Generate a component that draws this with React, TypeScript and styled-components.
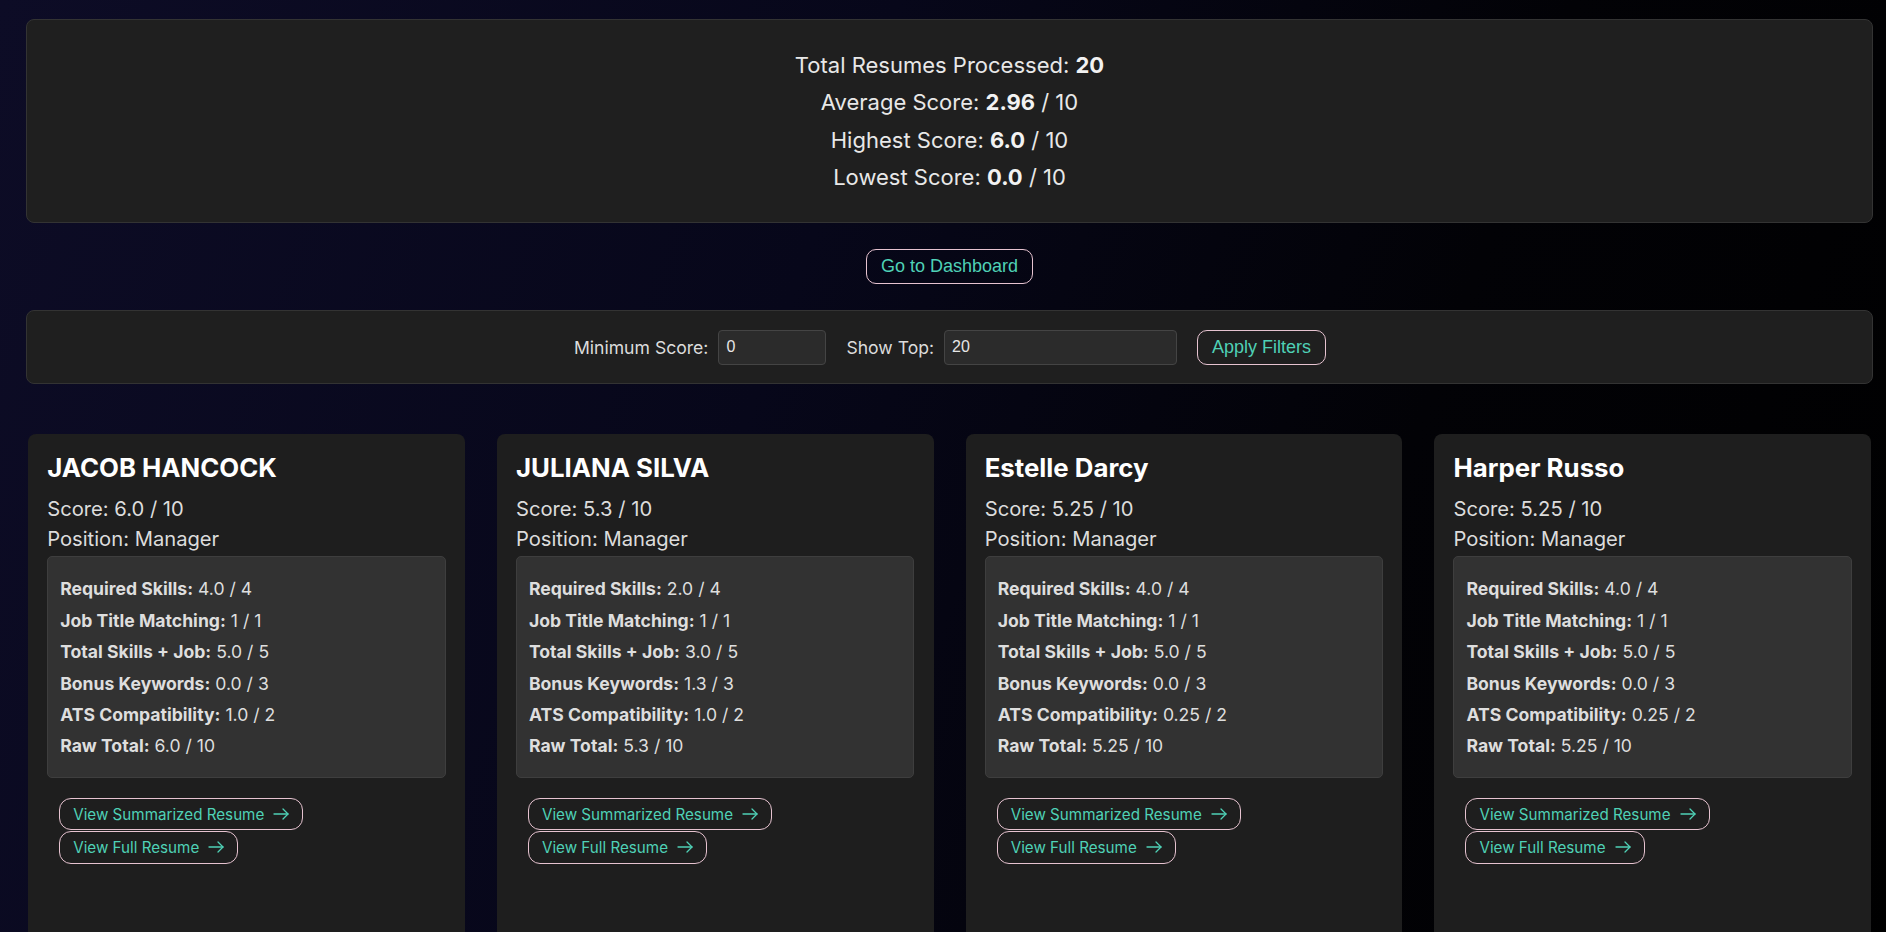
import React from "react";
import styled, { createGlobalStyle } from "styled-components";

const GlobalStyle = createGlobalStyle`
  html, body {
    margin: 0;
    padding: 0;
    overflow: hidden;
  }
  body {
    font-family: Inter, "Noto Sans", sans-serif;
    color: rgba(255, 255, 255, 0.87);
    background: linear-gradient(110deg, #0d0c26 0%, #07071a 40%, #020206 70%, #000000 100%);
    min-height: 100vh;
  }
`;

const Page = styled.div`
  display: flex;
  flex-direction: column;
  padding: 19px 13px 0 26px;
  min-height: 100vh;
  box-sizing: border-box;
`;

const StatsPanel = styled.section`
  background: #1f1f1f;
  border: 1px solid #333333;
  border-radius: 8px;
  padding: 27px 0 26px;
  text-align: center;
`;

const StatLine = styled.p`
  margin: 0;
  font-size: 22px;
  line-height: 37.3px;
  color: #e8e8e8;

  strong {
    font-weight: 700;
    color: #f2f2f2;
  }
`;

const CenterRow = styled.div`
  display: flex;
  justify-content: center;
  margin: 26px 0;
`;

const OutlineButton = styled.button`
  height: 35px;
  padding: 0 14px;
  border: 1px solid #e6c3d0;
  border-radius: 10px;
  background: transparent;
  color: #4fd1b6;
  font-family: "Liberation Sans", Arial, sans-serif;
  font-size: 18px;
  cursor: pointer;
`;

const FilterPanel = styled.section`
  display: flex;
  align-items: center;
  justify-content: center;
  gap: 20px;
  background: #1f1f1f;
  border: 1px solid #333333;
  border-radius: 8px;
  padding: 18.5px 0 18.5px 1px;
`;

const FilterGroup = styled.label`
  display: flex;
  align-items: center;
  gap: 10px;
  font-size: 17.6px;
  color: #dcdcdc;
`;

const FilterInput = styled.input<{ $w: number }>`
  box-sizing: border-box;
  width: ${(p) => p.$w}px;
  height: 35px;
  padding: 0 7px;
  background: #2b2b2b;
  border: 1px solid #444444;
  border-radius: 4px;
  color: #e6e6e6;
  font-family: "Liberation Sans", Arial, sans-serif;
  font-size: 16px;
  outline: none;
`;

const CardGrid = styled.div`
  display: grid;
  grid-template-columns: repeat(4, 1fr);
  gap: 32px;
  margin: 50px 2px 0;
`;

const Card = styled.article`
  background: #1e1e1e;
  border-radius: 8px;
  padding: 19.2px;
  min-height: 520px;
`;

const Name = styled.h2`
  margin: 0 0 11px;
  font-size: 25.8px;
  line-height: 30px;
  font-weight: 700;
  color: #ffffff;
`;

const InfoLine = styled.p`
  margin: 0;
  font-size: 20.2px;
  line-height: 30px;
  color: #dcdcdc;
`;

const Breakdown = styled.div`
  margin-top: 2px;
  background: #323232;
  border: 1px solid #3e3e3e;
  border-radius: 5px;
  padding: 19px 12px 17px;
  display: flex;
  flex-direction: column;
  gap: 5px;
`;

const BreakdownRow = styled.div`
  font-size: 17.6px;
  line-height: 26.4px;
  color: #dedede;

  b {
    font-weight: 700;
  }
`;

const Actions = styled.div`
  display: flex;
  flex-direction: column;
  align-items: flex-start;
  gap: 1px;
  margin-top: 20px;
  padding-left: 12px;
`;

const LinkButton = styled.a`
  display: inline-flex;
  align-items: center;
  gap: 9px;
  box-sizing: border-box;
  height: 32.4px;
  padding: 0 13px;
  border: 1px solid #e6c3d0;
  border-radius: 12px;
  color: #4fd1b6;
  font-size: 15.2px;
  text-decoration: none;
  cursor: pointer;
`;

const ArrowIcon = () => (
  <svg width="16" height="12" viewBox="0 0 16 12" fill="none" stroke="currentColor" strokeWidth="1.3" strokeLinecap="round" strokeLinejoin="round">
    <path d="M1 6h14" />
    <path d="M10 1l5 5-5 5" />
  </svg>
);

type Candidate = {
  name: string;
  score: string;
  required: string;
  title: string;
  total: string;
  bonus: string;
  ats: string;
  raw: string;
};

const candidates: Candidate[] = [
  { name: "JACOB HANCOCK", score: "6.0", required: "4.0", title: "1", total: "5.0", bonus: "0.0", ats: "1.0", raw: "6.0" },
  { name: "JULIANA SILVA", score: "5.3", required: "2.0", title: "1", total: "3.0", bonus: "1.3", ats: "1.0", raw: "5.3" },
  { name: "Estelle Darcy", score: "5.25", required: "4.0", title: "1", total: "5.0", bonus: "0.0", ats: "0.25", raw: "5.25" },
  { name: "Harper Russo", score: "5.25", required: "4.0", title: "1", total: "5.0", bonus: "0.0", ats: "0.25", raw: "5.25" },
];

export default function App() {
  return (
    <>
      <GlobalStyle />
      <Page>
        <StatsPanel>
          <StatLine>
            Total Resumes Processed: <strong>20</strong>
          </StatLine>
          <StatLine>
            Average Score: <strong>2.96</strong> / 10
          </StatLine>
          <StatLine>
            Highest Score: <strong>6.0</strong> / 10
          </StatLine>
          <StatLine>
            Lowest Score: <strong>0.0</strong> / 10
          </StatLine>
        </StatsPanel>

        <CenterRow>
          <OutlineButton>Go to Dashboard</OutlineButton>
        </CenterRow>

        <FilterPanel>
          <FilterGroup>
            Minimum Score:
            <FilterInput $w={108} type="number" defaultValue="0" />
          </FilterGroup>
          <FilterGroup>
            Show Top:
            <FilterInput $w={233} type="number" defaultValue="20" />
          </FilterGroup>
          <OutlineButton>Apply Filters</OutlineButton>
        </FilterPanel>

        <CardGrid>
          {candidates.map((c) => (
            <Card key={c.name}>
              <Name>{c.name}</Name>
              <InfoLine>Score: {c.score} / 10</InfoLine>
              <InfoLine>Position: Manager</InfoLine>
              <Breakdown>
                <BreakdownRow>
                  <b>Required Skills:</b> {c.required} / 4
                </BreakdownRow>
                <BreakdownRow>
                  <b>Job Title Matching:</b> {c.title} / 1
                </BreakdownRow>
                <BreakdownRow>
                  <b>Total Skills + Job:</b> {c.total} / 5
                </BreakdownRow>
                <BreakdownRow>
                  <b>Bonus Keywords:</b> {c.bonus} / 3
                </BreakdownRow>
                <BreakdownRow>
                  <b>ATS Compatibility:</b> {c.ats} / 2
                </BreakdownRow>
                <BreakdownRow>
                  <b>Raw Total:</b> {c.raw} / 10
                </BreakdownRow>
              </Breakdown>
              <Actions>
                <LinkButton>
                  View Summarized Resume
                  <ArrowIcon />
                </LinkButton>
                <LinkButton>
                  View Full Resume
                  <ArrowIcon />
                </LinkButton>
              </Actions>
            </Card>
          ))}
        </CardGrid>
      </Page>
    </>
  );
}
